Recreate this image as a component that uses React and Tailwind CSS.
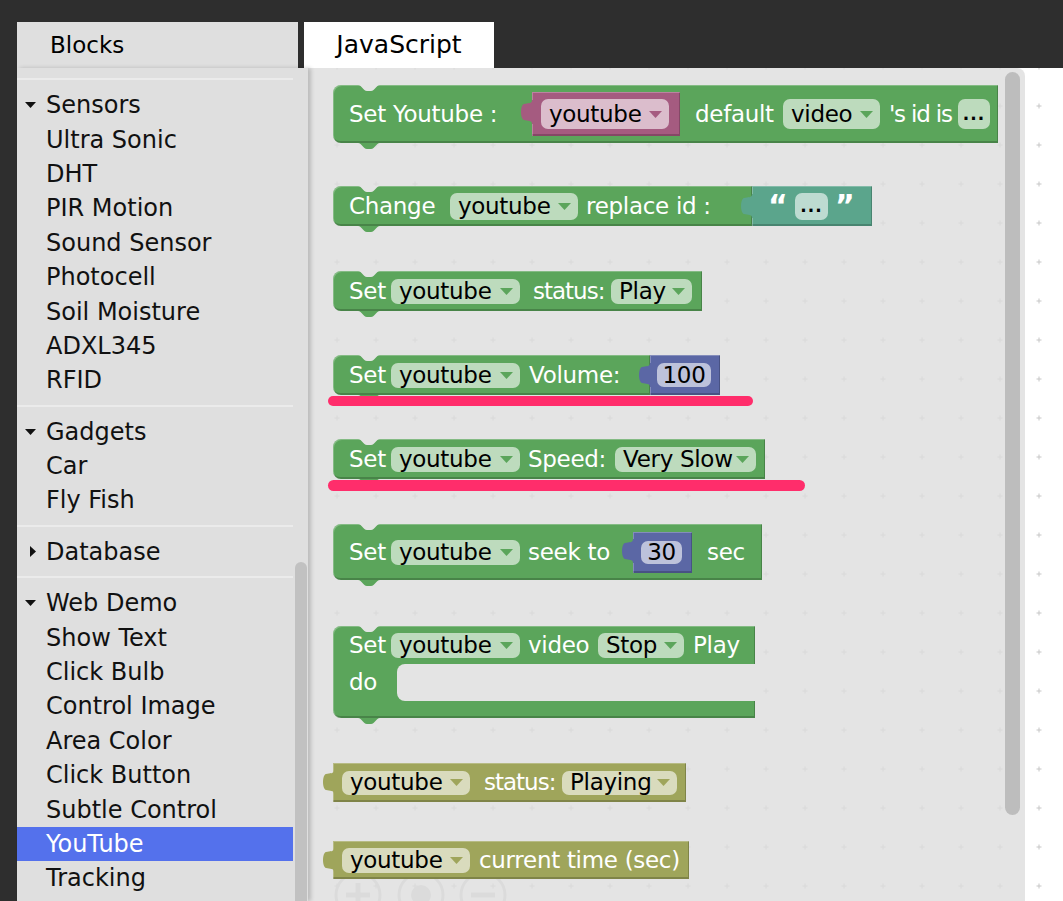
import React from "react";

const GREEN = "#5ba55b";
const OLIVE = "#9fa55b";
const PINK = "#a55b80";
const TEAL = "#5ba58c";
const BLUE = "#5b67a5";

const bevel =
  "shadow-[inset_1px_1px_0_rgba(255,255,255,0.25),inset_-1px_-2px_0_rgba(0,0,0,0.2)]";

const groups = [
  {
    title: "Sensors",
    open: true,
    items: ["Ultra Sonic", "DHT", "PIR Motion", "Sound Sensor", "Photocell", "Soil Moisture", "ADXL345", "RFID"],
  },
  { title: "Gadgets", open: true, items: ["Car", "Fly Fish"] },
  { title: "Database", open: false, items: [] },
  {
    title: "Web Demo",
    open: true,
    items: ["Show Text", "Click Bulb", "Control Image", "Area Color", "Click Button", "Subtle Control", "YouTube", "Tracking"],
  },
];

function TopNotch({ className = "left-[25px]" }) {
  return (
    <svg className={"absolute top-0 " + className} width="22" height="7" viewBox="0 0 22 7">
      <path d="M0 0 C4 0 5 6 9 6 H13 C17 6 18 0 22 0 Z" fill="#e4e4e4" />
    </svg>
  );
}

function BottomTab({ color, className = "left-[25px]" }) {
  return (
    <svg className={"absolute top-full " + className} width="22" height="6" viewBox="0 0 22 6">
      <path d="M0 0 C4 0 5 6 9 6 H13 C17 6 18 0 22 0 Z" fill={color} />
    </svg>
  );
}

function InTab({ color, className }) {
  return (
    <svg className={"absolute " + className} width="13" height="24" viewBox="0 0 13 24">
      <path d="M13 0 H12 C12 4 8 3 4 4 C0 5 0 19 4 20 C8 21 12 20 12 24 H13 Z" fill={color} />
    </svg>
  );
}

function T({ className, children }) {
  return <span className={"shrink-0 whitespace-nowrap text-white " + className}>{children}</span>;
}

function Field({ className, arrow, children }) {
  return (
    <div
      className={
        "shrink-0 flex items-center rounded-[7px] text-black " +
        (arrow ? "justify-between pl-[8px] pr-[7px] " : "justify-center ") +
        className
      }
    >
      <span className="whitespace-nowrap">{children}</span>
      {arrow && (
        <svg className="shrink-0" width="13" height="7" viewBox="0 0 13 7">
          <path d="M0 0 H13 L6.5 7 Z" fill={arrow} />
        </svg>
      )}
    </div>
  );
}

function Dots({ className }) {
  return (
    <Field className={"text-[17px] font-bold tracking-[1px] " + className}>...</Field>
  );
}

function YoutubeDd({ className = "h-[25px]" }) {
  return (
    <Field className={"ml-[8px] w-[129px] bg-[#bddbbd] " + className} arrow={GREEN}>
      youtube
    </Field>
  );
}

function Toolbox() {
  return (
    <div className="relative z-10 flex w-[291px] shrink-0 bg-[#dfdfdf] shadow-[3px_0_4px_rgba(0,0,0,0.18)]">
      <div className="flex w-[276px] flex-col pt-[10px] text-[24px] leading-none text-[#111]">
        {groups.map((g) => (
          <div key={g.title} className="border-t-2 border-[#ebebeb] pt-[8px] pb-[7px]">
            <div className="flex h-[34.4px] items-center pl-[8px]">
              <div className="flex w-[21px] items-center">
                {g.open ? (
                  <svg width="11" height="6" viewBox="0 0 11 6">
                    <path d="M0 0 H11 L5.5 6 Z" fill="#111" />
                  </svg>
                ) : (
                  <svg className="ml-[5px]" width="6" height="11" viewBox="0 0 6 11">
                    <path d="M0 0 L6 5.5 L0 11 Z" fill="#111" />
                  </svg>
                )}
              </div>
              <span>{g.title}</span>
            </div>
            {g.items.map((it) => (
              <div
                key={it}
                className={
                  "flex h-[34.4px] items-center pl-[29px] " +
                  (it === "YouTube" ? "bg-[#5471ec] text-white" : "")
                }
              >
                {it}
              </div>
            ))}
          </div>
        ))}
      </div>
      <div className="flex w-[15px] flex-col">
        <div className="mt-[494px] ml-[2px] w-[12px] flex-1 rounded-t-full bg-[#c1c1c1]" />
      </div>
    </div>
  );
}

function Blocks() {
  return (
    <div className="flex flex-col items-start pl-[25px] pt-[17px] text-[23px] leading-none tracking-[-0.3px]">
      {/* Set Youtube : ... default video 's id is ... */}
      <div className={"relative flex h-[58px] w-[665px] items-center rounded-l-[8px] bg-[#5ba55b] " + bevel}>
        <TopNotch />
        <BottomTab color={GREEN} />
        <T className="ml-[16px] w-[148px]">Set Youtube :</T>
        <div className={"relative ml-[35px] flex h-[44px] w-[148px] shrink-0 items-center bg-[#a55b80] pl-[9px] " + bevel}>
          <InTab color={PINK} className="left-[-12px] top-[8px]" />
          <Field className="h-[30px] w-[128px] bg-[#dbbdcc]" arrow={PINK}>
            youtube
          </Field>
        </div>
        <T className="ml-[15px] w-[76px]">default</T>
        <Field className="ml-[12px] h-[30px] w-[97px] bg-[#bddbbd]" arrow={GREEN}>
          video
        </Field>
        <T className="ml-[9px] w-[62px] tracking-[-1.2px]">'s id is</T>
        <Dots className="ml-[7px] h-[30px] w-[32px] bg-[#bddbbd]" />
      </div>

      {/* Change youtube replace id : "..." */}
      <div className="relative mt-[43px] flex h-[40px]">
        <div className={"relative flex h-[40px] w-[419px] items-center rounded-l-[8px] bg-[#5ba55b] " + bevel}>
          <TopNotch />
          <BottomTab color={GREEN} />
          <T className="ml-[16px] w-[92px]">Change</T>
          <Field className="ml-[9px] h-[27px] w-[128px] bg-[#bddbbd]" arrow={GREEN}>
            youtube
          </Field>
          <T className="ml-[8px] w-[129px]">replace id :</T>
        </div>
        <div className={"relative flex h-[40px] w-[120px] items-center bg-[#5ba58c] pl-[16px] " + bevel}>
          <InTab color={TEAL} className="left-[-12px] top-[8px]" />
          <T className="w-[19px] text-[30px] font-bold leading-none">“</T>
          <Dots className="ml-[8px] h-[27px] w-[33px] bg-[#bddbd1]" />
          <T className="ml-[7px] w-[21px] text-[30px] font-bold leading-none">”</T>
        </div>
      </div>

      {/* Set youtube status: Play */}
      <div className={"relative mt-[45px] flex h-[40px] w-[369px] items-center rounded-l-[8px] bg-[#5ba55b] " + bevel}>
        <TopNotch />
        <BottomTab color={GREEN} />
        <T className="ml-[16px] w-[34px]">Set</T>
        <YoutubeDd />
        <T className="ml-[13px] w-[70px] tracking-[-1px]">status:</T>
        <Field className="ml-[8px] h-[25px] w-[81px] bg-[#bddbbd]" arrow={GREEN}>
          Play
        </Field>
      </div>

      {/* Set youtube Volume: 100 */}
      <div className="relative mt-[44px] flex h-[40px]">
        <div className={"relative flex h-[40px] w-[317px] items-center rounded-l-[8px] bg-[#5ba55b] " + bevel}>
          <TopNotch />
          <BottomTab color={GREEN} />
          <T className="ml-[16px] w-[34px]">Set</T>
          <YoutubeDd />
          <T className="ml-[9px] w-[93px]">Volume:</T>
        </div>
        <div className={"relative flex h-[40px] w-[70px] items-center bg-[#5b67a5] pl-[7px] " + bevel}>
          <InTab color={BLUE} className="left-[-12px] top-[8px]" />
          <Field className="h-[24px] w-[54px] bg-[#bdc2db]">100</Field>
        </div>
      </div>

      {/* Set youtube Speed: Very Slow */}
      <div className={"relative mt-[44px] flex h-[40px] w-[432px] items-center rounded-l-[8px] bg-[#5ba55b] " + bevel}>
        <TopNotch />
        <BottomTab color={GREEN} />
        <T className="ml-[16px] w-[34px]">Set</T>
        <YoutubeDd />
        <T className="ml-[8px] w-[79px]">Speed:</T>
        <Field className="ml-[8px] h-[25px] w-[141px] bg-[#bddbbd]" arrow={GREEN}>
          Very Slow
        </Field>
      </div>

      {/* Set youtube seek to 30 sec */}
      <div className={"relative mt-[45px] flex h-[56px] w-[429px] items-center rounded-l-[8px] bg-[#5ba55b] " + bevel}>
        <TopNotch />
        <BottomTab color={GREEN} />
        <T className="ml-[16px] w-[34px]">Set</T>
        <YoutubeDd />
        <T className="ml-[8px] w-[78px]">seek to</T>
        <div className={"relative ml-[27px] flex h-[41px] w-[59px] shrink-0 items-center bg-[#5b67a5] pl-[8px] " + bevel}>
          <InTab color={BLUE} className="left-[-12px] top-[7px]" />
          <Field className="h-[23px] w-[41px] bg-[#bdc2db]">30</Field>
        </div>
        <T className="ml-[15px] w-[38px]">sec</T>
      </div>

      {/* Set youtube video Stop Play / do */}
      <div className="relative mt-[46px] flex w-[422px] flex-col">
        <div className="relative flex h-[38px] w-[422px] items-center rounded-tl-[8px] bg-[#5ba55b] shadow-[inset_1px_1px_0_rgba(255,255,255,0.25),inset_-1px_0_0_rgba(0,0,0,0.2)]">
          <TopNotch />
          <BottomTab color={GREEN} className="left-[84px]" />
          <T className="ml-[16px] w-[34px]">Set</T>
          <YoutubeDd />
          <T className="ml-[8px] w-[62px]">video</T>
          <Field className="ml-[8px] h-[25px] w-[86px] bg-[#bddbbd]" arrow={GREEN}>
            Stop
          </Field>
          <T className="ml-[9px] w-[44px]">Play</T>
        </div>
        <div className="flex h-[37px] w-[422px] bg-[#5ba55b] shadow-[inset_1px_0_0_rgba(255,255,255,0.25)]">
          <div className="flex w-[64px] items-center pl-[16px]">
            <T className="w-[30px]">do</T>
          </div>
          <div className="relative flex-1 rounded-l-[8px] bg-[#e4e4e4]">
            <BottomTab color={GREEN} className="left-[20px] top-0" />
          </div>
        </div>
        <div className="relative h-[17px] w-[422px] rounded-bl-[8px] bg-[#5ba55b] shadow-[inset_1px_0_0_rgba(255,255,255,0.25),inset_-1px_-2px_0_rgba(0,0,0,0.2)]">
          <BottomTab color={GREEN} />
        </div>
      </div>

      {/* youtube status: Playing */}
      <div className={"relative mt-[45px] flex h-[39px] w-[353px] items-center bg-[#9fa55b] " + bevel}>
        <InTab color={OLIVE} className="left-[-11px] top-[7px]" />
        <Field className="ml-[9px] h-[24px] w-[128px] bg-[#d9dbbd]" arrow={OLIVE}>
          youtube
        </Field>
        <T className="ml-[14px] w-[69px] tracking-[-1px]">status:</T>
        <Field className="ml-[9px] h-[24px] w-[115px] bg-[#d9dbbd]" arrow={OLIVE}>
          Playing
        </Field>
      </div>

      {/* youtube current time (sec) */}
      <div className={"relative mt-[39px] flex h-[38px] w-[356px] items-center bg-[#9fa55b] " + bevel}>
        <InTab color={OLIVE} className="left-[-11px] top-[7px]" />
        <Field className="ml-[9px] h-[25px] w-[128px] bg-[#d9dbbd]" arrow={OLIVE}>
          youtube
        </Field>
        <T className="ml-[9px] w-[192px]">current time (sec)</T>
      </div>
    </div>
  );
}

function Workspace() {
  return (
    <div className="relative flex-1 overflow-hidden bg-white">
      {/* grid */}
      <svg className="absolute inset-0" width="100%" height="100%">
        <defs>
          <pattern id="grid" x="10" y="19" width="39" height="39" patternUnits="userSpaceOnUse">
            <path d="M16.5 19 H21.5 M19 16.5 V21.5" stroke="#c6c6c6" strokeWidth="1" />
          </pattern>
        </defs>
        <rect width="100%" height="100%" fill="url(#grid)" />
      </svg>

      {/* zoom controls */}
      <svg className="absolute left-[20px] top-[800px]" width="190" height="60" viewBox="0 0 190 60">
        <g stroke="#d2d2d2" strokeWidth="3" fill="none">
          <circle cx="30" cy="27" r="22" />
          <circle cx="93" cy="27" r="22" />
          <circle cx="155" cy="27" r="22" />
          <path d="M18 27 H42 M30 15 V39" strokeWidth="5" />
          <path d="M143 27 H167" strokeWidth="5" />
        </g>
        <circle cx="93" cy="27" r="10" fill="#d2d2d2" />
      </svg>

      {/* flyout */}
      <div className="relative h-full w-[717px] rounded-tr-[8px] bg-[#dddddd]/80">
        <Blocks />
        <div className="absolute left-[697px] top-[4px] h-[743px] w-[15px] rounded-full bg-[#bdbdbd]" />
        <div className="absolute left-[20px] top-[328px] h-[10px] w-[425px] rounded-full bg-[#ff2d6b]" />
        <div className="absolute left-[20px] top-[412px] h-[11px] w-[477px] rounded-full bg-[#ff2d6b]" />
      </div>
    </div>
  );
}

export default function App() {
  return (
    <div className="flex h-[901px] w-[1063px] flex-col overflow-hidden bg-[#2e2e2e] pl-[17px] pt-[22px] font-['DejaVu_Sans',sans-serif]">
      <div className="flex h-[46px] shrink-0 text-black">
        <div className="flex w-[281px] items-center bg-[#dfdfdf] pl-[33px] text-[23px]">Blocks</div>
        <div className="ml-[6px] flex w-[190px] items-center justify-center bg-white text-[25px]">JavaScript</div>
      </div>
      <div className="flex min-h-0 flex-1">
        <Toolbox />
        <Workspace />
      </div>
    </div>
  );
}
